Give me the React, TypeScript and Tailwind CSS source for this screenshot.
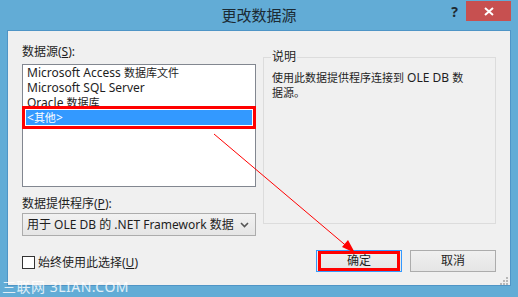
import React from 'react';

const ui = { fontFamily: '"Noto Sans", "Noto Sans CJK SC", sans-serif' };

// CJK runs render a little narrower than the Latin ones in the original dialog
function Mixed({ text }: { text: string }) {
  const parts = text.split(/([\u3000-\u9fff\uff00-\uffef]+)/).filter(Boolean);
  return (
    <>
      {parts.map((p, i) =>
        /[\u3000-\u9fff\uff00-\uffef]/.test(p) ? (
          <span key={i} className="text-[11px]">{p}</span>
        ) : (
          <span key={i}>{p}</span>
        )
      )}
    </>
  );
}

export default function App() {
  const sources = ['Microsoft Access 数据库文件', 'Microsoft SQL Server', 'Oracle 数据库', '<其他>'];

  return (
    <div className="relative w-[518px] h-[297px] bg-[#62acd6] overflow-hidden text-[12px] text-[#1e1e1e]" style={ui}>
      {/* ── Title bar ─────────────────────────────── */}
      <div className="h-[30px] flex items-start relative">
        <div className="absolute left-0 right-0 top-[4px] text-center text-[15px] text-[#1b2a33]">更改数据源</div>
        <div className="ml-auto flex items-start">
          <span className="mt-[2px] mr-[8px] text-[14px] font-bold text-[#1e2a30] leading-[20px]">?</span>
          <button className="w-[45px] h-[20px] mt-[1px] mr-[7px] bg-[#c75050] flex items-center justify-center">
            <svg width="10" height="9" viewBox="0 0 10 9">
              <path d="M1 1 L9 8 M9 1 L1 8" stroke="#fff" strokeWidth="2" />
            </svg>
          </button>
        </div>
      </div>

      {/* ── Client area ───────────────────────────── */}
      <div className="ml-[7px] w-[504px] h-[256px] bg-[#f0f0f0] border border-[#4f95c6] pl-[14px] pr-[13px]">
        <div className="flex gap-[7px] pt-[13px]">
          {/* left column */}
          <div className="w-[234px] flex flex-col">
            <div className="h-[20px] leading-[16px]">数据源(<span className="underline">S</span>):</div>
            <div className="h-[123px] bg-white border border-[#828790] px-[3px]">
              {sources.map((s, i) => (
                <div
                  key={s}
                  className={
                    i === 3
                      ? 'h-[15px] leading-[15px] pl-[1px] bg-[#3399ff] text-white outline-3 outline-[#ff0000] outline-offset-[1px]'
                      : 'h-[15px] leading-[15px] pl-[1px]'
                  }
                >
                  <Mixed text={s} />
                </div>
              ))}
            </div>
            <div className="mt-[9px] h-[17px] leading-[16px]">数据提供程序(<span className="underline">P</span>):</div>
            <div className="h-[23px] border border-[#acacac] bg-gradient-to-b from-[#f2f2f2] to-[#e5e5e5] flex items-center pl-[4px] pr-[6px]">
              <span className="flex-1 overflow-hidden whitespace-nowrap">用于 OLE DB 的 .NET Framework 数据</span>
              <svg width="9" height="6" viewBox="0 0 9 6" className="ml-[5px]">
                <path d="M1 1 L4.5 4.5 L8 1" stroke="#555" strokeWidth="1.6" fill="none" />
              </svg>
            </div>
          </div>

          {/* right column: group box */}
          <fieldset className="w-[233px] h-[174px] mt-[13px] border border-[#dcdcdc] px-[8px] -translate-y-[7px]">
            <legend className="px-[1px] -ml-[1px] leading-[14px]">说明</legend>
            <p className="mt-[6px] leading-[15px] w-[198px]">
              <Mixed text="使用此数据提供程序连接到 OLE DB 数据源。" />
            </p>
          </fieldset>
        </div>

        {/* bottom row */}
        <div className="flex items-center mt-[14px]">
          <div className="flex items-center gap-[3px] mt-[3px]">
            <span className="w-[13px] h-[13px] border border-[#333] bg-white" />
            <span>始终使用此选择(<span className="underline">U</span>)</span>
          </div>
          <div className="ml-auto flex gap-[8px] mr-[1px]">
            <button className="w-[86px] h-[22px] border border-[#3399ff] bg-gradient-to-b from-[#f0f0f0] to-[#e5e5e5] flex items-center justify-center">
              <span className="w-[82px] h-[20px] border-3 border-[#ff0000] flex items-center justify-center leading-none">确定</span>
            </button>
            <button className="w-[86px] h-[22px] border border-[#acacac] bg-gradient-to-b from-[#f0f0f0] to-[#e5e5e5]">取消</button>
          </div>
        </div>
      </div>

      {/* resize grip */}
      <svg className="absolute left-[500px] top-[277px]" width="9" height="9" viewBox="0 0 9 9">
        <rect x="6" y="0" width="2" height="2" fill="#b8b8b8" />
        <rect x="3" y="3" width="2" height="2" fill="#b8b8b8" />
        <rect x="6" y="3" width="2" height="2" fill="#b8b8b8" />
        <rect x="0" y="6" width="2" height="2" fill="#b8b8b8" />
        <rect x="3" y="6" width="2" height="2" fill="#b8b8b8" />
        <rect x="6" y="6" width="2" height="2" fill="#b8b8b8" />
      </svg>

      {/* annotation arrow */}
      <svg className="absolute left-0 top-0 pointer-events-none" width="518" height="297">
        <line x1="214" y1="134" x2="350" y2="249" stroke="#ff0000" strokeWidth="1" />
        <polygon points="355,253 342,247 348,240" fill="#ff0000" />
      </svg>

      {/* watermark */}
      <div className="absolute left-[2px] top-[276px] text-[14px] text-white/80 tracking-[0.5px] whitespace-nowrap">三联网 3LIAN.COM</div>
    </div>
  );
}
